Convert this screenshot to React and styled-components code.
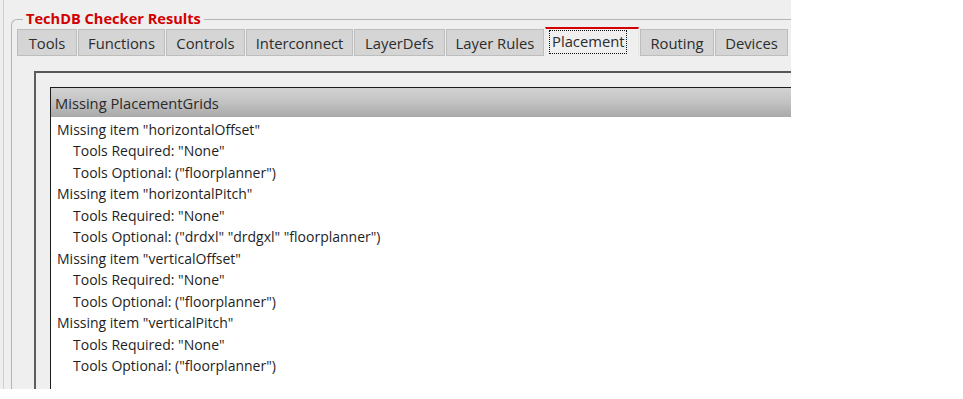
import React from 'react';
import styled, { createGlobalStyle } from 'styled-components';

// styles
const GlobalStyle = createGlobalStyle`
  body {
    margin: 0;
    background: #ffffff;
    font-family: "Open Sans", "DejaVu Sans", sans-serif;
  }
`

const Window = styled.div`
  width: 791px;
  height: 389px;
  background: #efefef;
  padding-left: 3px;
  box-sizing: border-box;
  display: flex;
  overflow: hidden;
`

const Frame = styled.div`
  flex: 1;
  display: flex;
  border-left: 1px solid #cfcfcf;
  padding: 10px 0 0 7px;
  min-width: 0;
`

const Group = styled.fieldset`
  flex: 1;
  min-width: 0;
  margin: 0;
  padding: 0 0 0 5px;
  border: 1px solid #b4b4b4;
  border-right: none;
  border-bottom: none;
  border-top-left-radius: 6px;
  display: flex;
  flex-direction: column;
`

const Title = styled.legend`
  color: #d20000;
  font-weight: 700;
  font-size: 14.6px;
  line-height: 16px;
  padding: 0 3px 2px;
  margin-left: 6px;
`

const TabBar = styled.div`
  display: flex;
  align-items: flex-end;
  gap: 1px;
  height: 29px;
  margin-top: -1px;
`

const Tab = styled.div`
  width: ${p => p.$w}px;
  height: 27px;
  box-sizing: border-box;
  display: flex;
  align-items: center;
  justify-content: center;
  font-size: 14.8px;
  color: #2c2c2c;
  background: ${p => (p.$active ? '#efefef' : '#d5d5d5')};
  border: 1px solid #bdbdbd;
  border-bottom: ${p => (p.$active ? 'none' : '1px solid #bdbdbd')};
  border-top: ${p => (p.$active ? '2px solid #d40000' : '1px solid #bdbdbd')};
  ${p => p.$active && 'height: 29px; border-left-color: #e6e6e6; border-right-color: #e6e6e6; justify-content: flex-start; padding: 0 0 1px 3px;'}
`

const Focus = styled.span`
  border: 1px dotted #111;
  padding: 1px 1px 2px 2px;
  line-height: 19px;
`

const Pane = styled.div`
  flex: 1;
  display: flex;
  padding: 15px 0 0 17px;
  min-height: 0;
`

const Sunken = styled.div`
  flex: 1;
  display: flex;
  border-top: 2px solid #585858;
  border-left: 2px solid #5e5e5e;
  padding: 14px 0 0 14px;
  min-width: 0;
`

const List = styled.div`
  flex: 1;
  background: #ffffff;
  border-top: 1px solid #1c1c1c;
  border-left: 1px solid #1c1c1c;
  min-width: 0;
`

const Header = styled.div`
  height: 29px;
  display: flex;
  align-items: center;
  padding-left: 4px;
  font-size: 14.7px;
  color: #2a2a2a;
  background: linear-gradient(#d2d2d2, #c4c4c4 45%, #a9a9a9);
`

const Rows = styled.div`
  padding: 2px 0 0 6px;
`

const Row = styled.div`
  font-size: 14px;
  line-height: 21.45px;
  color: #1e1e1e;
  padding-left: ${p => (p.$sub ? 16 : 0)}px;
  white-space: nowrap;
`

const tabs = [
  ['Tools', 60],
  ['Functions', 87],
  ['Controls', 79],
  ['Interconnect', 107],
  ['LayerDefs', 91],
  ['Layer Rules', 98],
  ['Placement', 94],
  ['Routing', 74],
  ['Devices', 73],
]

const items = [
  ['horizontalOffset', '("floorplanner")'],
  ['horizontalPitch', '("drdxl" "drdgxl" "floorplanner")'],
  ['verticalOffset', '("floorplanner")'],
  ['verticalPitch', '("floorplanner")'],
]

const App = () => {
  return (
    <>
      <GlobalStyle />
      <Window>
        <Frame>
          <Group>
            <Title>TechDB Checker Results</Title>
            <TabBar>
              {tabs.map(([name, w]) => {
                const active = name === 'Placement'
                return (
                  <Tab key={name} $active={active} $w={w}>
                    {active ? <Focus>{name}</Focus> : name}
                  </Tab>
                )
              })}
            </TabBar>
            <Pane>
              <Sunken>
                <List>
                  <Header>Missing PlacementGrids</Header>
                  <Rows>
                    {items.map(([item, opt]) => (
                      <React.Fragment key={item}>
                        <Row>Missing item "{item}"</Row>
                        <Row $sub>Tools Required: "None"</Row>
                        <Row $sub>Tools Optional: {opt}</Row>
                      </React.Fragment>
                    ))}
                  </Rows>
                </List>
              </Sunken>
            </Pane>
          </Group>
        </Frame>
      </Window>
    </>
  )
}
export default App
